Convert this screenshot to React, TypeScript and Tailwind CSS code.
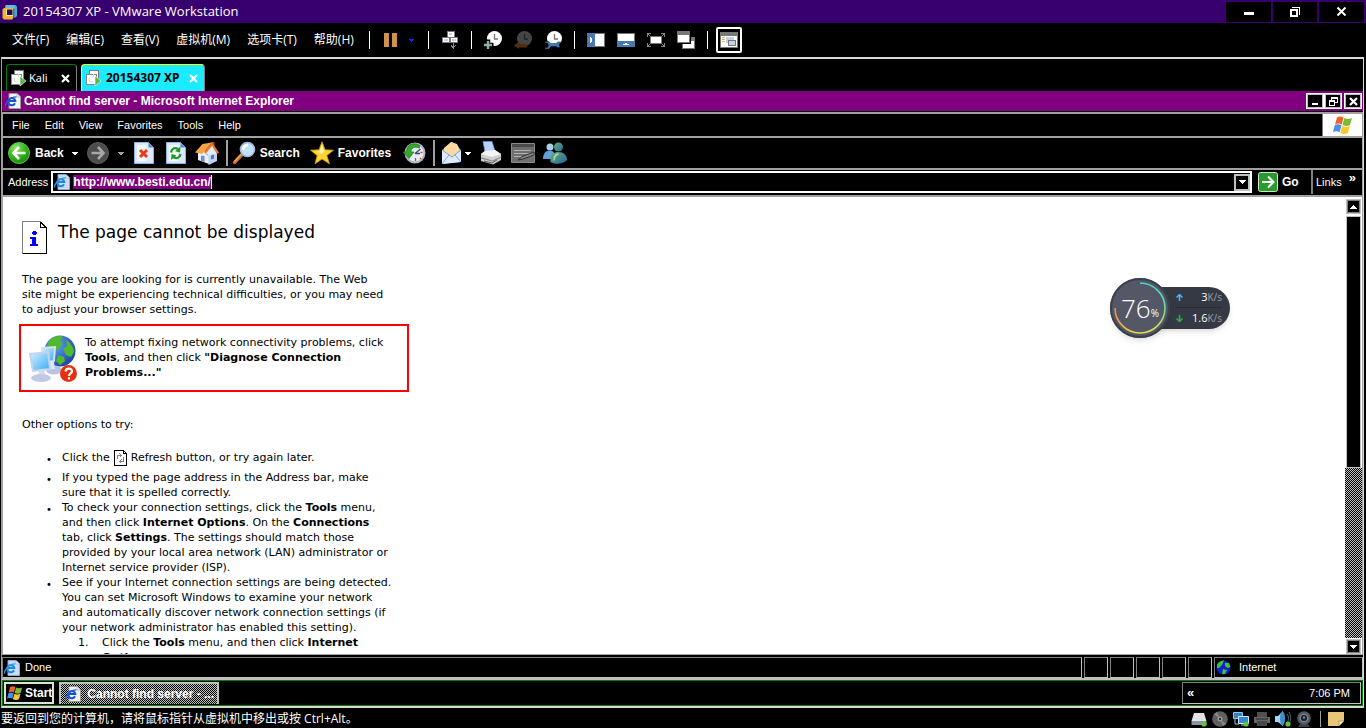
import type { ReactNode } from "react";

const uiFont = "font-['Liberation_Sans',sans-serif]";
const hatch =
  "bg-[repeating-conic-gradient(#000_0_25%,#c0c0c0_0_50%)] bg-[length:2px_2px]";

const vmMenus = ["文件(F)", "编辑(E)", "查看(V)", "虚拟机(M)", "选项卡(T)", "帮助(H)"];
const ieMenus = ["File", "Edit", "View", "Favorites", "Tools", "Help"];

/* ---------- small shared pieces ---------- */

function IconButton({ label, children }: { label: string; children: ReactNode }) {
  return (
    <button type="button" aria-label={label} className="flex shrink-0 items-center">
      {children}
    </button>
  );
}

function Divider({ className = "" }: { className?: string }) {
  return <div className={`h-[18px] w-px shrink-0 bg-white ${className}`} />;
}

function Caret({ className = "text-white" }: { className?: string }) {
  return (
    <svg width="6" height="3" viewBox="0 0 6 3" className={className} shapeRendering="crispEdges">
      <path d="M0 0h6v1H5v1H4v1H2V2H1V1H0z" fill="currentColor" />
    </svg>
  );
}

function ScrollArrow({ className = "" }: { className?: string }) {
  return (
    <svg width="7" height="4" viewBox="0 0 7 4" className={className} shapeRendering="crispEdges">
      <path d="M0 0h7v1H6v1H5v1H4v1H3V3H2V2H1V1H0z" fill="#fff" />
    </svg>
  );
}

/* ---------- VMware icons ---------- */

function VmLogo() {
  return (
    <svg width="16" height="16" viewBox="0 0 16 16">
      <path d="M4 1h9.500L15 2.500V12l-1.500 1.500H11V5H3V2z" fill="#45a9cc" />
      <path d="M2 4h9v10.500L10 15.500H2L.5 14V5.500z" fill="#f0b236" />
      <path d="M4 4V1h7.500L13 2.500V4z" fill="#62bedc" />
      <path d="M4 5h8v7H4z" fill="#f6e3a8" />
      <path d="M5 5.500h5.500v5.500H5z" fill="#2b0a52" />
      <path d="M11 5h1.500v8H11z" fill="#2c7fa8" />
    </svg>
  );
}

function VmTabIcon() {
  return (
    <svg width="16" height="16" viewBox="0 0 16 16" shapeRendering="crispEdges">
      <path d="M3.500.500h9v9h-9z" fill="#fff" stroke="#777" />
      <path d="M.5 4.500h10v10H.5z" fill="#fff" stroke="#888" />
      <path d="M3 7h1v4h3v1H3zM7 4h1v3H7z" fill="#cfdcec" />
      <path d="M9 6v10l6-5z" fill="#55b848" stroke="#fff" strokeWidth=".6" shapeRendering="auto" />
    </svg>
  );
}

function SendKeysIcon() {
  return (
    <svg width="16" height="18" viewBox="0 0 16 18" shapeRendering="crispEdges">
      <path d="M5 0h7v6H5z" fill="#fff" stroke="#777" />
      <path d="M.5 6.500h7v5h-7zM8.500 6.500h7v5h-7z" fill="#fff" stroke="#777" />
      <path d="M7 2h3v2H7zM2 8h4v2H2zM10 8h4v2h-4z" fill="#c3d2ea" />
      <path d="M11 12h1v6h-1zM9 14h1v1h1v2h-1v-1H9zM13 14h1v1h-1v1h-1v-1h1z" fill="#8a8a8a" />
    </svg>
  );
}

function ClockIcon({ kind }: { kind: "add" | "revert" | "manage" }) {
  const dim = kind === "revert";
  return (
    <svg width="18" height="18" viewBox="0 0 18 18">
      <circle cx="10.500" cy="7.500" r="7.500" fill={dim ? "#454545" : "#fff"} />
      <path d="M10.500 3v5H14" fill="none" stroke={dim ? "#222" : "#777"} strokeWidth="1.300" />
      {kind === "add" && (
        <>
          <path d="M4 8.500v9.500M0 14h9.500" stroke="#000" strokeWidth="4.500" />
          <path d="M4 10v8M0 14h8" stroke="#8eaf9e" strokeWidth="2.400" />
        </>
      )}
      {kind === "revert" && <path d="M0 14.500 5 10.500v2.500h8v3.500H5V18z" fill="#4d2f12" />}
      {kind === "manage" && (
        <path d="M1 10.500h4l1.500 2h6l1-1.500h3L15 14l1.500 2.500h-3L12 15.500H7L5 18H1v-1.500h2.500l1-2-1-2.500H1z" fill="#3d7cb8" stroke="#000" strokeWidth=".4" />
      )}
    </svg>
  );
}

function SidebarViewIcon() {
  return (
    <svg width="18" height="14" viewBox="0 0 18 14" shapeRendering="crispEdges">
      <path d="M0 0h18v14H0z" fill="#777" />
      <path d="M8 1h9v12H8z" fill="#fff" />
      <path d="M0 0h8v14H0z" fill="#4779b3" />
      <path d="M3 4h1v1h1v4H4v1H3z" fill="#fff" />
    </svg>
  );
}

function BottomViewIcon() {
  return (
    <svg width="18" height="14" viewBox="0 0 18 14" shapeRendering="crispEdges">
      <path d="M0 0h18v14H0z" fill="#777" />
      <path d="M1 1h16v7H1z" fill="#fff" />
      <path d="M0 8h18v6H0z" fill="#4779b3" />
      <path d="M8 10h2v1h2v1H6v-1h2z" fill="#fff" />
    </svg>
  );
}

function FullScreenIcon() {
  return (
    <svg width="18" height="14" viewBox="0 0 18 14" shapeRendering="crispEdges">
      <path d="M3.500 3.500h11v7h-11z" fill="#fff" stroke="#777" />
      <path d="M.5 4V.5H4M14 .5h3.500V4M17.500 10v3.500H14M4 13.500H.5V10M1 1l2 2M17 1l-2 2M1 13l2-2M17 13l-2-2" fill="none" stroke="#888" />
    </svg>
  );
}

function UnityIcon() {
  return (
    <svg width="18" height="18" viewBox="0 0 18 18" shapeRendering="crispEdges">
      <path d="M5 6h13v12H5z" fill="#777" />
      <path d="M6 10h11v7H6z" fill="#fff" />
      <path d="M-1-1h15v14H-1z" fill="#000" />
      <path d="M0 0h13v12H0z" fill="#777" />
      <path d="M1 4h11v7H1z" fill="#fff" />
    </svg>
  );
}

function ConsoleViewIcon() {
  return (
    <svg width="18" height="16" viewBox="0 0 18 16" shapeRendering="crispEdges">
      <path d="M0 0h18v16H0z" fill="#777" />
      <path d="M1 4h16v11H1z" fill="#fff" />
      <path d="M2 5h3v1H2zM2 7h3v1H2zM2 9h3v1H2z" fill="#e0b060" />
      <path d="M6 5h8v6H6z" fill="#c3d2ea" />
      <path d="M8.500 8.500h7v5h-7z" fill="#c3d2ea" stroke="#777" />
    </svg>
  );
}

/* ---------- Internet Explorer icons ---------- */

function IePageIcon({ blue = false }: { blue?: boolean }) {
  return (
    <svg width="16" height="16" viewBox="0 0 16 16" className="shrink-0">
      <path d="M4 .5h8L15.500 4v11.500H4z" fill={blue ? "#c9dcfa" : "#f4f4ee"} stroke={blue ? "#86a5dc" : "#999"} />
      <path d="M12 .5V4h3.500z" fill="#fff" stroke={blue ? "#86a5dc" : "#999"} strokeWidth=".6" />
      <path d="M10 10.300A3.600 3.600 0 1 1 10.300 8H4" fill="none" stroke={blue ? "#1c86d8" : "#1152cf"} strokeWidth="2" />
      <path d="M.8 13.500C-.5 11 5 3.500 11.500 3.800" fill="none" stroke={blue ? "#2b9bec" : "#1a5fd8"} strokeWidth="1.300" />
    </svg>
  );
}

function WindowsFlag({ size }: { size: number }) {
  return (
    <svg width={size} height={size} viewBox="0 0 20 20" className="shrink-0">
      <path d="M4 2.500C6 1 8 1.200 10.500 2.500L8.700 9.500C6.500 8.200 4.400 8.200 2 9.500z" fill="#f0602a" />
      <path d="M11.300 3c2 1.200 4.700 1.300 7.700 0l-2 7c-2.200 1.300-4.800 1.200-7.500 0z" fill="#7cbb33" />
      <path d="M1.800 10.300c2.200-1.300 4.300-1.200 6.700 0l-1.900 6.900c-2-1.300-4.300-1.300-6.600 0z" fill="#4a8fe2" />
      <path d="M9.200 10.900c2.400 1.200 4.900 1.300 7.600 0l-1.900 7c-2.500 1.300-4.900 1.300-7.600 0z" fill="#fbc52c" />
    </svg>
  );
}

function ArrowCircle({ back = false }: { back?: boolean }) {
  return (
    <svg width="22" height="22" viewBox="0 0 22 22">
      <defs>
        <radialGradient id="backGreen" cx=".35" cy=".25" r=".9">
          <stop offset="0" stopColor="#8fe56d" />
          <stop offset=".5" stopColor="#35b41c" />
          <stop offset="1" stopColor="#0f7a08" />
        </radialGradient>
      </defs>
      <circle cx="11" cy="11" r="10.500" fill={back ? "url(#backGreen)" : "#4d4d4d"} stroke={back ? "#5cc945" : "#5e5e5e"} />
      <path
        d={back ? "M11 5 5.500 11l5.500 6M6 11h11.500" : "m11 5 5.500 6-5.500 6M16 11H4.500"}
        fill="none"
        stroke={back ? "#fff" : "#a8a8a8"}
        strokeWidth="2.600"
      />
    </svg>
  );
}

function PageButtonIcon({ kind }: { kind: "stop" | "refresh" }) {
  return (
    <svg width="20" height="22" viewBox="0 0 20 22">
      <path d="M.5.500h14l5 5v16H.5z" fill="#dbe9fd" stroke="#8fb0e8" />
      <path d="M3 3h9v16H3z" fill="#f3f8ff" />
      <path d="M14.500.500v5h5z" fill="#5b86d4" />
      {kind === "stop" ? (
        <path d="m6 8 7 7m0-7-7 7" stroke="#ee3a14" strokeWidth="3" />
      ) : (
        <>
          <path d="M5 10.500C5.500 6.500 9 5 12 7" fill="none" stroke="#1c9a22" strokeWidth="2.200" />
          <path d="m14.500 4.500-.5 6-5-1.300z" fill="#1c9a22" />
          <path d="M14.500 12c-.5 4-4 5-7 3" fill="none" stroke="#1c9a22" strokeWidth="2.200" />
          <path d="m5 18 .5-6 5 1.500z" fill="#1c9a22" />
        </>
      )}
    </svg>
  );
}

function HomeIcon() {
  return (
    <svg width="24" height="24" viewBox="0 0 24 24">
      <path d="M16 1h3.500v9L16 7z" fill="#c93a14" />
      <path d="M3 11 9 9l5 4v10L3 19z" fill="#e9f1fd" />
      <path d="m13.500 13 4.500-7 4 6v8l-8.500 4z" fill="#bfd3f4" />
      <path d="M0 11.500 7.500 3 17 1.500l-7.500 9L7 13z" fill="#f8a445" />
      <path d="m9 11 8-9.500 7 10-2 1.500-5-6.500-4.500 8z" fill="#e8792a" />
      <path d="M11 12.500 17 5l4 6.500V13l-7 1z" fill="#dfeafc" />
      <path d="M6 14.500 9.500 15v6L6 20z" fill="#6f8fc8" />
      <path d="m16 14.500 3-1v4l-3 1z" fill="#5076bd" />
    </svg>
  );
}

function SearchIcon() {
  return (
    <svg width="24" height="24" viewBox="0 0 24 24">
      <path d="m2.500 21.500 7.500-8" stroke="#c47028" strokeWidth="3.500" strokeLinecap="round" />
      <path d="m2.500 20.500 6.500-7" stroke="#f0ad66" strokeWidth="1.200" />
      <circle cx="15.500" cy="8.500" r="7" fill="#bfe1fb" stroke="#a5b8e2" strokeWidth="1.600" />
      <path d="M11 9a5 5 0 0 1 5-5" fill="none" stroke="#fff" strokeWidth="2.500" />
    </svg>
  );
}

function StarIcon() {
  return (
    <svg width="24" height="24" viewBox="0 0 24 24">
      <path d="m12 .8 3 8 8.500.4-6.700 5.300 2.700 8.300-7.500-4.700-7 4.700 2.200-8.300L.5 9.200 9 8.800z" fill="#fcd430" stroke="#dd9a08" strokeWidth=".8" />
      <path d="m12 3 2 7-2 3-6-2.500 4-.5z" fill="#fff6b0" />
    </svg>
  );
}

function HistoryIcon() {
  return (
    <svg width="23" height="22" viewBox="0 0 23 22">
      <circle cx="12" cy="11" r="9.500" fill="#e3eefa" stroke="#aab6c4" strokeWidth="2" />
      <path d="M12 11.500 17.500 7M12 11.500h5" stroke="#445" strokeWidth="1.300" />
      <path d="M12.500 16v3m5-8.500h2M17 16l1 1" stroke="#e04020" strokeWidth="1.300" />
      <path d="M16.500 3.500C10-.5 3.500 3 3.500 10H0l6 6.500 5-6.500H8c0-4 3.500-6 8.500-4z" fill="#38a629" stroke="#1b7a15" strokeWidth=".7" />
    </svg>
  );
}

function MailIcon() {
  return (
    <svg width="22" height="24" viewBox="0 0 22 24">
      <path d="M1 9 11 1l9 8v12L1 23z" fill="#7fa9e8" />
      <path d="M3 7 10 1l6 2 3 6-8 7-8-5z" fill="#fbd9a0" />
      <path d="m1 9 10 7 9-7v12L1 23z" fill="#dcebff" />
      <path d="m1 9 10 7 9-7M1 23l7-9m12 7-6-7" fill="none" stroke="#7da4de" />
    </svg>
  );
}

function PrinterIcon() {
  return (
    <svg width="24" height="24" viewBox="0 0 24 24">
      <path d="M4 .5h9L16 10 6 11z" fill="#b8d2fb" stroke="#6f97dc" strokeWidth=".7" />
      <path d="m2 13 4-3 10-1 6 4v6l-8 4.500L2 20z" fill="#cfcfcf" />
      <path d="m2 13 11 3 9-3-6-4-10 1z" fill="#f4f4f4" />
      <path d="m2 17 11.500 3 9-4" fill="none" stroke="#808080" />
      <path d="m5 20 8 2 5-3" fill="none" stroke="#555" />
    </svg>
  );
}

function EditIcon() {
  return (
    <svg width="24" height="20" viewBox="0 0 24 20">
      <path d="M.5.500h23v19H.5z" fill="#6f6f6f" stroke="#8b8b8b" />
      <path d="M1 1h22v3H1z" fill="#4b4b4b" />
      <path d="M3 7.500h17M3 10.500h15M3 13.500h8" stroke="#b0b0b0" />
      <path d="m7 17 4-3.500L23 9v3l-11 4z" fill="#858585" stroke="#2b2b2b" strokeWidth=".9" />
    </svg>
  );
}

function MessengerIcon() {
  return (
    <svg width="24" height="22" viewBox="0 0 24 22">
      <defs>
        <linearGradient id="buddy" x1="0" y1="0" x2="1" y2="1">
          <stop offset="0" stopColor="#66b26a" />
          <stop offset="1" stopColor="#2762a6" />
        </linearGradient>
      </defs>
      <circle cx="7" cy="5" r="3.500" fill="#a9cfe8" />
      <path d="M0 17c0-6 3-8.500 7-8.500S12 12 12 17z" fill="#5e9fd6" />
      <circle cx="15.500" cy="5" r="4.500" fill="url(#buddy)" />
      <path d="M7.500 20c-1-7 3-10 8-10s8.500 3.500 8.500 8c-3 4-12 5-16.500 2z" fill="url(#buddy)" />
      <path d="M11 18.500c0-4.500 1.500-6 4.500-6.500" fill="none" stroke="#9fd3a8" strokeWidth="1.800" />
    </svg>
  );
}

function GoIcon() {
  return (
    <svg width="20" height="20" viewBox="0 0 20 20">
      <rect x=".5" y=".5" width="19" height="19" rx="2" fill="#2a9a2c" stroke="#c8e8c8" />
      <path d="M4 10h11M10 4.500l5.500 5.500-5.500 5.500" fill="none" stroke="#fff" strokeWidth="2" />
    </svg>
  );
}

/* ---------- page icons ---------- */

function InfoPageIcon() {
  return (
    <svg width="25" height="33" viewBox="0 0 25 33" shapeRendering="crispEdges">
      <path d="M.5.500h18l6 6v26H.5z" fill="#fff" stroke="#808080" />
      <path d="M18.500 1v5.500H24M24.500 6v26.500H1" fill="none" stroke="#000" />
      <path d="M19 1v1h1v1h1v1h1v1h1v1h1" fill="none" stroke="#000" />
      <path d="M11 10h3v1h1v2h-1v1h-3v-1h-1v-2h1zM8 16h6v7h2v2H8v-2h2v-5H8z" fill="#00f" />
    </svg>
  );
}

function NetworkIcon() {
  return (
    <svg width="50" height="48" viewBox="0 0 50 48" className="shrink-0">
      <defs>
        <radialGradient id="globeBlue" cx=".35" cy=".3" r=".8">
          <stop offset="0" stopColor="#5fa6f5" />
          <stop offset="1" stopColor="#153f9c" />
        </radialGradient>
        <linearGradient id="screenBlue" x1="0" y1="0" x2="1" y2="1">
          <stop offset="0" stopColor="#d4f3ff" />
          <stop offset="1" stopColor="#38a8ee" />
        </linearGradient>
      </defs>
      <circle cx="31" cy="16" r="15.500" fill="url(#globeBlue)" />
      <path d="M22 4c4-3.500 9-3.500 12-2l-3 4 3 3-5 5-4 4-4-4-3 1c0-4 1-8 4-11zM37 5c5 3 8 8 8 12l-3 5-5-2-3-6 4-3zM29 20l6 2 1 4-5 4-4-4z" fill="#52b82d" />
      <path d="m13 13 13-1-1 14-11 2z" fill="url(#screenBlue)" stroke="#d7e0f0" strokeWidth="2" />
      <ellipse cx="25" cy="35" rx="8" ry="4.500" fill="#b9c3e0" />
      <path d="m20 27 5 0 1 7h-5z" fill="#dde4f4" />
      <path d="m1 19 18-2 2 17-17 2z" fill="url(#screenBlue)" stroke="#c5d3ec" strokeWidth="2" />
      <path d="m9 35 6-1 2 8h-7z" fill="#d5dcf0" />
      <ellipse cx="12" cy="43" rx="10" ry="4" fill="#c2c9e6" />
      <circle cx="39.500" cy="38.500" r="8.500" fill="#e5300f" />
      <path d="M36.500 36.500c.5-4 7-3.500 6.500 0-.3 2-3 2-3 4.500m0 1.300v2.200" fill="none" stroke="#fff" strokeWidth="2.200" />
    </svg>
  );
}

function SmallRefreshIcon() {
  return (
    <svg width="13" height="16" viewBox="0 0 13 16" className="mx-1 inline-block align-middle" shapeRendering="crispEdges">
      <path d="M.5.500h9l3 3v12H.5z" fill="#fff" stroke="#000" />
      <path d="M9.500 0v3.500H13" fill="none" stroke="#000" />
      <path d="M3.500 9V5.500H7M5.500 3.500l2 2-2 2M9.500 7v4.500H6M7.500 9.500l-2 2 2 2" fill="none" stroke="#808080" />
    </svg>
  );
}

function GlobeIcon() {
  return (
    <svg width="15" height="15" viewBox="0 0 15 15">
      <circle cx="7.500" cy="7.500" r="7" fill="#1020d0" />
      <path d="M1 5c1-3 4-4.500 7-4.500L6 5 3 8 1 8zM9 3l4 0 1.500 4-3 1L9 6zM7 9l4 1-2 4-3 0z" fill="#3fc234" />
    </svg>
  );
}

/* ---------- sections ---------- */

function WindowTitle() {
  return (
    <header className="flex h-[23px] shrink-0 items-center bg-[#37006e] pl-0.5">
      <VmLogo />
      <h1 className="flex-1 pl-[5px] font-['Open_Sans','Noto_Sans',sans-serif] text-[13px] text-white">
        20154307 XP - VMware Workstation
      </h1>
      <div className="flex gap-0.5 pr-0.5">
        <button type="button" aria-label="最小化" className="flex h-5 w-[45px] items-center justify-center bg-black">
          <span className="mt-1 h-[3px] w-2.5 bg-white" />
        </button>
        <button type="button" aria-label="还原" className="flex h-5 w-11 items-center justify-center bg-black">
          <svg width="10" height="10" viewBox="0 0 10 10" shapeRendering="crispEdges">
            <path d="M1 3h6v6H1z" fill="none" stroke="#fff" strokeWidth="2" />
            <path d="M2 .5h7.500V8" fill="none" stroke="#fff" />
          </svg>
        </button>
        <button type="button" aria-label="关闭" className="flex h-5 w-[45px] items-center justify-center bg-black">
          <svg width="9" height="9" viewBox="0 0 9 9">
            <path d="m.5.500 8 8m0-8-8 8" stroke="#fff" strokeWidth="2" />
          </svg>
        </button>
      </div>
    </header>
  );
}

function VmMenuBar() {
  return (
    <div className="flex h-[34px] shrink-0 items-center gap-3 bg-black pl-3 text-white">
      <nav className="mr-0.5 flex gap-[17px] font-['Open_Sans','Noto_Sans_CJK_SC',sans-serif] text-xs">
        {vmMenus.map((m) => (
          <button key={m} type="button" className="whitespace-nowrap">
            {m}
          </button>
        ))}
      </nav>
      <Divider className="mx-px" />
      <IconButton label="挂起">
        <svg width="14" height="14" viewBox="0 0 14 14">
          <path d="M1 0h5v14H1zM9 0h5v14H9z" fill="#d2924f" />
        </svg>
      </IconButton>
      <IconButton label="电源选项">
        <svg width="6" height="3" viewBox="0 0 6 3" shapeRendering="crispEdges">
          <path d="M0 0h5v1H4v1H3v1H2V2H1V1H0z" fill="#2020ff" />
        </svg>
      </IconButton>
      <Divider className="mx-px" />
      <IconButton label="发送 Ctrl+Alt+Del"><SendKeysIcon /></IconButton>
      <Divider className="ml-px" />
      <IconButton label="拍摄快照"><ClockIcon kind="add" /></IconButton>
      <IconButton label="恢复快照"><ClockIcon kind="revert" /></IconButton>
      <IconButton label="管理快照"><ClockIcon kind="manage" /></IconButton>
      <Divider />
      <IconButton label="显示库"><SidebarViewIcon /></IconButton>
      <IconButton label="显示缩略图栏"><BottomViewIcon /></IconButton>
      <IconButton label="全屏"><FullScreenIcon /></IconButton>
      <IconButton label="Unity"><UnityIcon /></IconButton>
      <Divider />
      <button type="button" aria-label="控制台视图" className="-ml-1 flex size-[26px] items-center justify-center rounded-xs border-2 border-white">
        <ConsoleViewIcon />
      </button>
    </div>
  );
}

function CloseCross() {
  return (
    <svg width="9" height="9" viewBox="0 0 9 9">
      <path d="m1 1 7 7m0-7-7 7" stroke="#fff" strokeWidth="2.200" />
    </svg>
  );
}

function VmTabs() {
  return (
    <div className="flex h-8 shrink-0 items-end gap-1 bg-black pl-1 font-['Noto_Sans','Open_Sans',sans-serif] text-[11px]">
      <div className="flex h-[27px] w-[71px] items-center rounded-t border-x border-t border-[#808080] border-l-[#008000] border-t-[#008000] pl-1 text-white">
        <VmTabIcon />
        <button type="button" className="flex-1 pl-0.5 text-left">Kali</button>
        <button type="button" aria-label="关闭 Kali" className="pr-1.5"><CloseCross /></button>
      </div>
      <div className="flex h-[27px] w-[124px] items-center rounded-t border-x border-t border-[#808080] border-l-[#ffff00] border-t-[#ffff00] bg-[#1aebff] pl-1 font-bold text-black">
        <VmTabIcon />
        <button type="button" className="flex-1 whitespace-nowrap pl-1 text-left text-xs">20154307 XP</button>
        <button type="button" aria-label="关闭 20154307 XP" className="pr-1.5"><CloseCross /></button>
      </div>
    </div>
  );
}

function IeTitle() {
  const box = "flex h-4 w-[18px] items-center justify-center border border-white bg-black outline-1 -outline-offset-2 outline-[#c0c0c0]";
  return (
    <div className="flex h-[21px] shrink-0 items-center border-b border-black bg-[#800080] pl-[3px] pr-px">
      <IePageIcon />
      <h2 className="flex-1 pl-[3px] text-xs font-bold text-white">
        Cannot find server - Microsoft Internet Explorer
      </h2>
      <button type="button" aria-label="Minimize" className={box}>
        <span className="mt-1.5 h-0.5 w-1.5 bg-white" />
      </button>
      <button type="button" aria-label="Restore" className={box}>
        <svg width="9" height="9" viewBox="0 0 9 9" shapeRendering="crispEdges">
          <path d="M2.500 3V.5h6v5H6M2.500 1h6M.5 3.500h5v5h-5zM.5 4.500h5" fill="none" stroke="#fff" />
        </svg>
      </button>
      <button type="button" aria-label="Close" className={`ml-0.5 ${box}`}>
        <CloseCross />
      </button>
    </div>
  );
}

function IeMenuBar() {
  return (
    <div className="flex h-6 shrink-0 items-stretch border-t-2 border-[#a0a0a0] text-[11px]">
      <nav className="flex flex-1 items-center gap-[15px] pl-[9px]">
        {ieMenus.map((m) => (
          <button key={m} type="button">{m}</button>
        ))}
      </nav>
      <div className="flex w-10 items-center justify-center border-l border-[#808080] bg-white">
        <WindowsFlag size={20} />
      </div>
    </div>
  );
}

function IeToolbar() {
  return (
    <div className="flex h-8 shrink-0 items-center border-t-2 border-[#a0a0a0] pl-[5px] text-xs font-bold">
      <button type="button" className="flex items-center gap-[5px]">
        <ArrowCircle back />
        <span>Back</span>
      </button>
      <button type="button" aria-label="Back history" className="ml-2"><Caret /></button>
      <div className="ml-[9px] flex items-center gap-[9px]">
        <IconButton label="Forward"><ArrowCircle /></IconButton>
        <IconButton label="Forward history"><Caret className="text-[#a0a0a0]" /></IconButton>
      </div>
      <div className="ml-2.5 flex items-center gap-3">
        <IconButton label="Stop"><PageButtonIcon kind="stop" /></IconButton>
        <IconButton label="Refresh"><PageButtonIcon kind="refresh" /></IconButton>
      </div>
      <div className="ml-[9px] flex"><IconButton label="Home"><HomeIcon /></IconButton></div>
      <div className="ml-[7px] mr-1 h-[26px] w-0.5 bg-[#a0a0a0]" />
      <button type="button" className="flex items-center gap-1">
        <SearchIcon />
        <span>Search</span>
      </button>
      <button type="button" className="ml-2.5 flex items-center gap-1">
        <StarIcon />
        <span>Favorites</span>
      </button>
      <div className="ml-3 flex items-center"><IconButton label="History"><HistoryIcon /></IconButton></div>
      <div className="ml-[7px] mr-1.5 h-[26px] w-0.5 bg-[#a0a0a0]" />
      <IconButton label="Mail"><MailIcon /></IconButton>
      <button type="button" aria-label="Mail options" className="ml-0.5"><Caret /></button>
      <div className="ml-2 flex items-center gap-2">
        <IconButton label="Print"><PrinterIcon /></IconButton>
        <IconButton label="Edit"><EditIcon /></IconButton>
        <IconButton label="Messenger"><MessengerIcon /></IconButton>
      </div>
    </div>
  );
}

function AddressBar() {
  return (
    <div className="flex h-[27px] shrink-0 items-center border-t-2 border-[#a0a0a0] pb-px pl-[5px] text-[11px]">
      <label htmlFor="address">Address</label>
      <div className="ml-[3px] flex h-[22px] flex-1 items-center border-2 border-white bg-black pl-px">
        <IePageIcon blue />
        <input
          id="address"
          type="text"
          defaultValue="http://www.besti.edu.cn/"
          className="ml-[3px] field-sizing-content h-[14px] border-r border-white bg-[#800080] text-xs font-bold text-white outline-none"
        />
        <button type="button" aria-label="Address list" className="ml-auto flex h-[17px] w-4 items-center justify-center border-2 border-[#c0c0c0]">
          <ScrollArrow />
        </button>
      </div>
      <button type="button" className="ml-1.5 flex w-[53px] items-center gap-1 text-xs font-bold">
        <GoIcon />
        <span>Go</span>
      </button>
      <button type="button" className="flex h-full w-[51px] items-center justify-between border-l-2 border-[#808080] pl-[3px] pr-1.5">
        <span>Links</span>
        <span className="pb-2 text-[13px] font-bold leading-3">»</span>
      </button>
    </div>
  );
}

function SpeedWidget() {
  return (
    <div className="absolute right-[132px] top-[81px] flex items-center font-['Open_Sans',sans-serif]">
      <div className="z-10 flex size-[60px] items-center justify-center rounded-full bg-[#535766] shadow-md">
        <svg width="60" height="60" viewBox="0 0 60 60" className="absolute left-0 top-0">
          <defs>
            <linearGradient id="ring" x1="0" y1="0" x2="0" y2="1">
              <stop offset="0" stopColor="#48d6d0" />
              <stop offset=".5" stopColor="#6fdc98" />
              <stop offset="1" stopColor="#e6dc50" />
            </linearGradient>
            <linearGradient id="ringEnd" x1="1" y1="1" x2="0" y2="0">
              <stop offset="0" stopColor="#e6dc50" />
              <stop offset="1" stopColor="#f08a4a" />
            </linearGradient>
          </defs>
          <circle cx="30" cy="30" r="29" fill="none" stroke="#3c404c" strokeWidth="2" />
          <path d="M30 5a25 25 0 0 1 0 50" fill="none" stroke="url(#ring)" strokeWidth="1.600" />
          <path d="M30 55A25 25 0 0 1 5 30" fill="none" stroke="url(#ringEnd)" strokeWidth="1.600" />
        </svg>
        <span className="z-10 text-[26px] font-light leading-none text-white">76</span>
        <span className="z-10 pt-2.5 text-[10px] text-white">%</span>
      </div>
      <div className="-ml-5 w-20 divide-y divide-[#2a2d36] rounded-r-full bg-[#353944] pl-[26px] pr-2 text-[11px] text-white shadow-md">
        <p className="flex h-[21px] items-center">
          <svg width="7" height="7" viewBox="0 0 7 7"><path d="M3.500 7V1M.5 3.500l3-3 3 3" fill="none" stroke="#4ab4f4" strokeWidth="1.500" /></svg>
          <span className="ml-auto">3</span>
          <span className="text-[10px] text-[#9a9da6]">K/s</span>
        </p>
        <p className="flex h-[21px] items-center">
          <svg width="7" height="7" viewBox="0 0 7 7"><path d="M3.500 0v6M.5 3.500l3 3 3-3" fill="none" stroke="#2fb344" strokeWidth="1.500" /></svg>
          <span className="ml-auto">1.6</span>
          <span className="text-[10px] text-[#9a9da6]">K/s</span>
        </p>
      </div>
    </div>
  );
}

function ErrorPage() {
  const bullet = "before:float-left before:-ml-4 before:pt-0.5 before:text-[10px] before:content-['•']";
  return (
    <article className="min-w-0 flex-1 overflow-hidden pl-[19px] pt-6 font-['DejaVu_Sans',Verdana,sans-serif] text-[11px] leading-[15px] text-black">
      <div className="flex gap-[11px]">
        <InfoPageIcon />
        <h3 className="text-[17px] leading-[22px]">The page cannot be displayed</h3>
      </div>
      <p className="mt-[18px] whitespace-nowrap">
        The page you are looking for is currently unavailable. The Web
        <br />
        site might be experiencing technical difficulties, or you may need
        <br />
        to adjust your browser settings.
      </p>
      <div className="-ml-[3px] mt-[7px] flex h-[68px] w-[390px] gap-1.5 whitespace-nowrap border-2 border-[#f00] pl-2 pt-[9px]">
        <NetworkIcon />
        <p>
          To attempt fixing network connectivity problems, click
          <br />
          <b>Tools</b>, and then click <b>"Diagnose Connection</b>
          <br />
          <b>Problems..."</b>
        </p>
      </div>
      <p className="mt-[25px]">Other options to try:</p>
      <ul className="mt-[18px] whitespace-nowrap pl-10">
        <li className={`h-5 ${bullet}`}>
          Click the
          <SmallRefreshIcon />
          Refresh button, or try again later.
        </li>
        <li className={bullet}>
          If you typed the page address in the Address bar, make
          <br />
          sure that it is spelled correctly.
        </li>
        <li className={bullet}>
          To check your connection settings, click the <b>Tools</b> menu,
          <br />
          and then click <b>Internet Options</b>. On the <b>Connections</b>
          <br />
          tab, click <b>Settings</b>. The settings should match those
          <br />
          provided by your local area network (LAN) administrator or
          <br />
          Internet service provider (ISP).
        </li>
        <li className={bullet}>
          See if your Internet connection settings are being detected.
          <br />
          You can set Microsoft Windows to examine your network
          <br />
          and automatically discover network connection settings (if
          <br />
          your network administrator has enabled this setting).
          <ol className="pl-10">
            <li className="before:float-left before:-ml-6 before:content-['1.']">
              Click the <b>Tools</b> menu, and then click <b>Internet</b>
              <br />
              <b>Options</b>.
            </li>
          </ol>
        </li>
      </ul>
    </article>
  );
}

function ScrollBar() {
  const btn = "mx-px flex h-[15px] shrink-0 items-center justify-center border border-[#c0c0c0] bg-black outline-1 -outline-offset-2 outline-[#808080]";
  return (
    <div className={`mt-0.5 flex w-[17px] shrink-0 flex-col ${hatch}`}>
      <div className="border-x border-white bg-white pb-0.5">
        <button type="button" aria-label="Scroll up" className={`w-[15px] -mx-0 ${btn.replace("mx-px ", "")}`}>
          <ScrollArrow className="rotate-180" />
        </button>
      </div>
      <div className="border-x border-white">
        <div className="h-[252px] border border-[#c0c0c0] bg-black" />
      </div>
      <div className="mt-auto border-x border-white bg-white pt-px">
        <button type="button" aria-label="Scroll down" className={`w-[15px] ${btn.replace("mx-px ", "")}`}>
          <ScrollArrow />
        </button>
      </div>
    </div>
  );
}

function StatusBar() {
  const cell = "border border-[#808080] border-b-[#c0c0c0] border-r-[#c0c0c0]";
  return (
    <div className="flex h-[25px] shrink-0 gap-0.5 border-b-2 border-[#c0c0c0] pt-0.5 text-[11px]">
      <div className={`flex flex-1 items-center gap-[5px] pl-px ${cell}`}>
        <IePageIcon blue />
        <span>Done</span>
      </div>
      {[0, 1, 2, 3, 4].map((n) => (
        <div key={n} className={`w-6 ${cell}`} />
      ))}
      <div className={`flex w-[149px] items-center gap-2 pl-px ${cell}`}>
        <GlobeIcon />
        <span>Internet</span>
      </div>
    </div>
  );
}

function TaskBar() {
  return (
    <div className="flex h-[26px] shrink-0 items-center border border-[#008000] pl-px text-xs">
      <button type="button" className="flex h-[22px] items-center gap-0.5 border-2 border-[#e0e0e0] pl-px font-bold">
        <WindowsFlag size={16} />
        <span>Start</span>
      </button>
      <button type="button" className={`ml-[5px] flex h-[22px] w-40 items-center gap-1.5 border-2 border-b-0 border-[#c0c0c0] pl-1 font-bold ${hatch}`}>
        <IePageIcon />
        <span className="whitespace-nowrap">Cannot find server - ...</span>
      </button>
      <div className="ml-auto mr-px flex h-[22px] w-[179px] items-center justify-between border border-[#808080] border-b-[#c0c0c0] border-r-[#c0c0c0] pl-1 pr-2.5">
        <button type="button" aria-label="Show hidden icons" className="text-[13px] font-bold leading-4">«</button>
        <time className="text-[11px]">7:06 PM</time>
      </div>
    </div>
  );
}

function GreenDot() {
  return <circle cx="13" cy="13" r="2.600" fill="#5cc43c" />;
}

function FooterBar() {
  return (
    <footer className="flex h-[20px] shrink-0 items-center bg-black pt-0.5 font-['Open_Sans','Noto_Sans_CJK_SC',sans-serif] text-xs text-white">
      <p className="flex-1 whitespace-nowrap pl-px">要返回到您的计算机，请将鼠标指针从虚拟机中移出或按 Ctrl+Alt。</p>
      <div className="flex items-center gap-[5px] pr-[22px]">
        <svg width="16" height="16" viewBox="0 0 16 16">
          <path d="M3 2h10l2.500 8H.5z" fill="#dfe4e8" />
          <path d="M.5 10h15v4H.5z" fill="#8b949c" />
          <GreenDot />
        </svg>
        <svg width="16" height="16" viewBox="0 0 16 16">
          <circle cx="8" cy="8" r="7.800" fill="#606060" />
          <path d="M8 8 2 3l3-2zM8 8l6 5-3 2z" fill="#888" />
          <circle cx="8" cy="8" r="2.500" fill="#999" />
          <circle cx="8" cy="8" r="1" fill="#111" />
        </svg>
        <svg width="16" height="16" viewBox="0 0 16 16">
          <path d="M.5 1.500h9v6h-9z" fill="#3580bd" stroke="#8fc4ec" />
          <path d="M5.500 5.500h10v7h-10z" fill="#2e86d0" stroke="#d7ecfb" />
          <path d="M2 8v5h4M8 14h6" fill="none" stroke="#8fc4ec" />
          <GreenDot />
        </svg>
        <svg width="16" height="16" viewBox="0 0 16 16">
          <path d="M3 1h10v5H3z" fill="#4f4f4f" />
          <path d="M0 6h16v6H0z" fill="#666" />
          <path d="M3 10h10v5H3z" fill="#484848" />
          <path d="M2 8h12" stroke="#222" />
        </svg>
        <svg width="16" height="16" viewBox="0 0 16 16">
          <path d="M0 5h3l5-5v15l-5-4H0z" fill="#a9d3f3" />
          <ellipse cx="7.500" cy="7.500" rx="2.500" ry="7" fill="#3f8fd0" />
          <path d="M12 3c2 2.500 2 6 0 9m2-11c2 4 2 9 0 12" fill="none" stroke="#556a80" />
          <GreenDot />
        </svg>
        <svg width="16" height="16" viewBox="0 0 16 16">
          <path d="M4 13h8l2 3H2z" fill="#3b3f44" />
          <circle cx="8" cy="7" r="6.800" fill="#555b62" />
          <circle cx="8" cy="7" r="3.800" fill="#1d2126" stroke="#8a939c" />
          <circle cx="8" cy="6.500" r="1.300" fill="#5d81a5" />
        </svg>
        <div className="ml-[3px] mr-0.5 h-4 w-px bg-[#a0a0a0]" />
        <svg width="16" height="14" viewBox="0 0 16 14">
          <path d="M0 0h16v9l-5 5H0z" fill="#e6c779" />
          <path d="M11 14V9h5z" fill="#fff0c0" stroke="#9b7a30" strokeWidth=".6" />
        </svg>
      </div>
    </footer>
  );
}

export default function App() {
  return (
    <div className={`flex h-screen flex-col overflow-hidden bg-black text-white ${uiFont}`}>
      <WindowTitle />
      <VmMenuBar />
      <main className="ml-px mr-0.5 flex min-h-0 flex-1 flex-col border-x border-y-2 border-[#d8d8d8] border-l-[#a0a0a0]">
        <VmTabs />
        <IeTitle />
        <section className="flex min-h-0 flex-1 flex-col border-x border-[#a0a0a0]">
          <IeMenuBar />
          <IeToolbar />
          <AddressBar />
          <div className="relative flex min-h-0 flex-1 border-b border-t-2 border-[#a0a0a0] bg-white">
            <ErrorPage />
            <ScrollBar />
            <SpeedWidget />
          </div>
        </section>
        <StatusBar />
        <TaskBar />
      </main>
      <FooterBar />
    </div>
  );
}
